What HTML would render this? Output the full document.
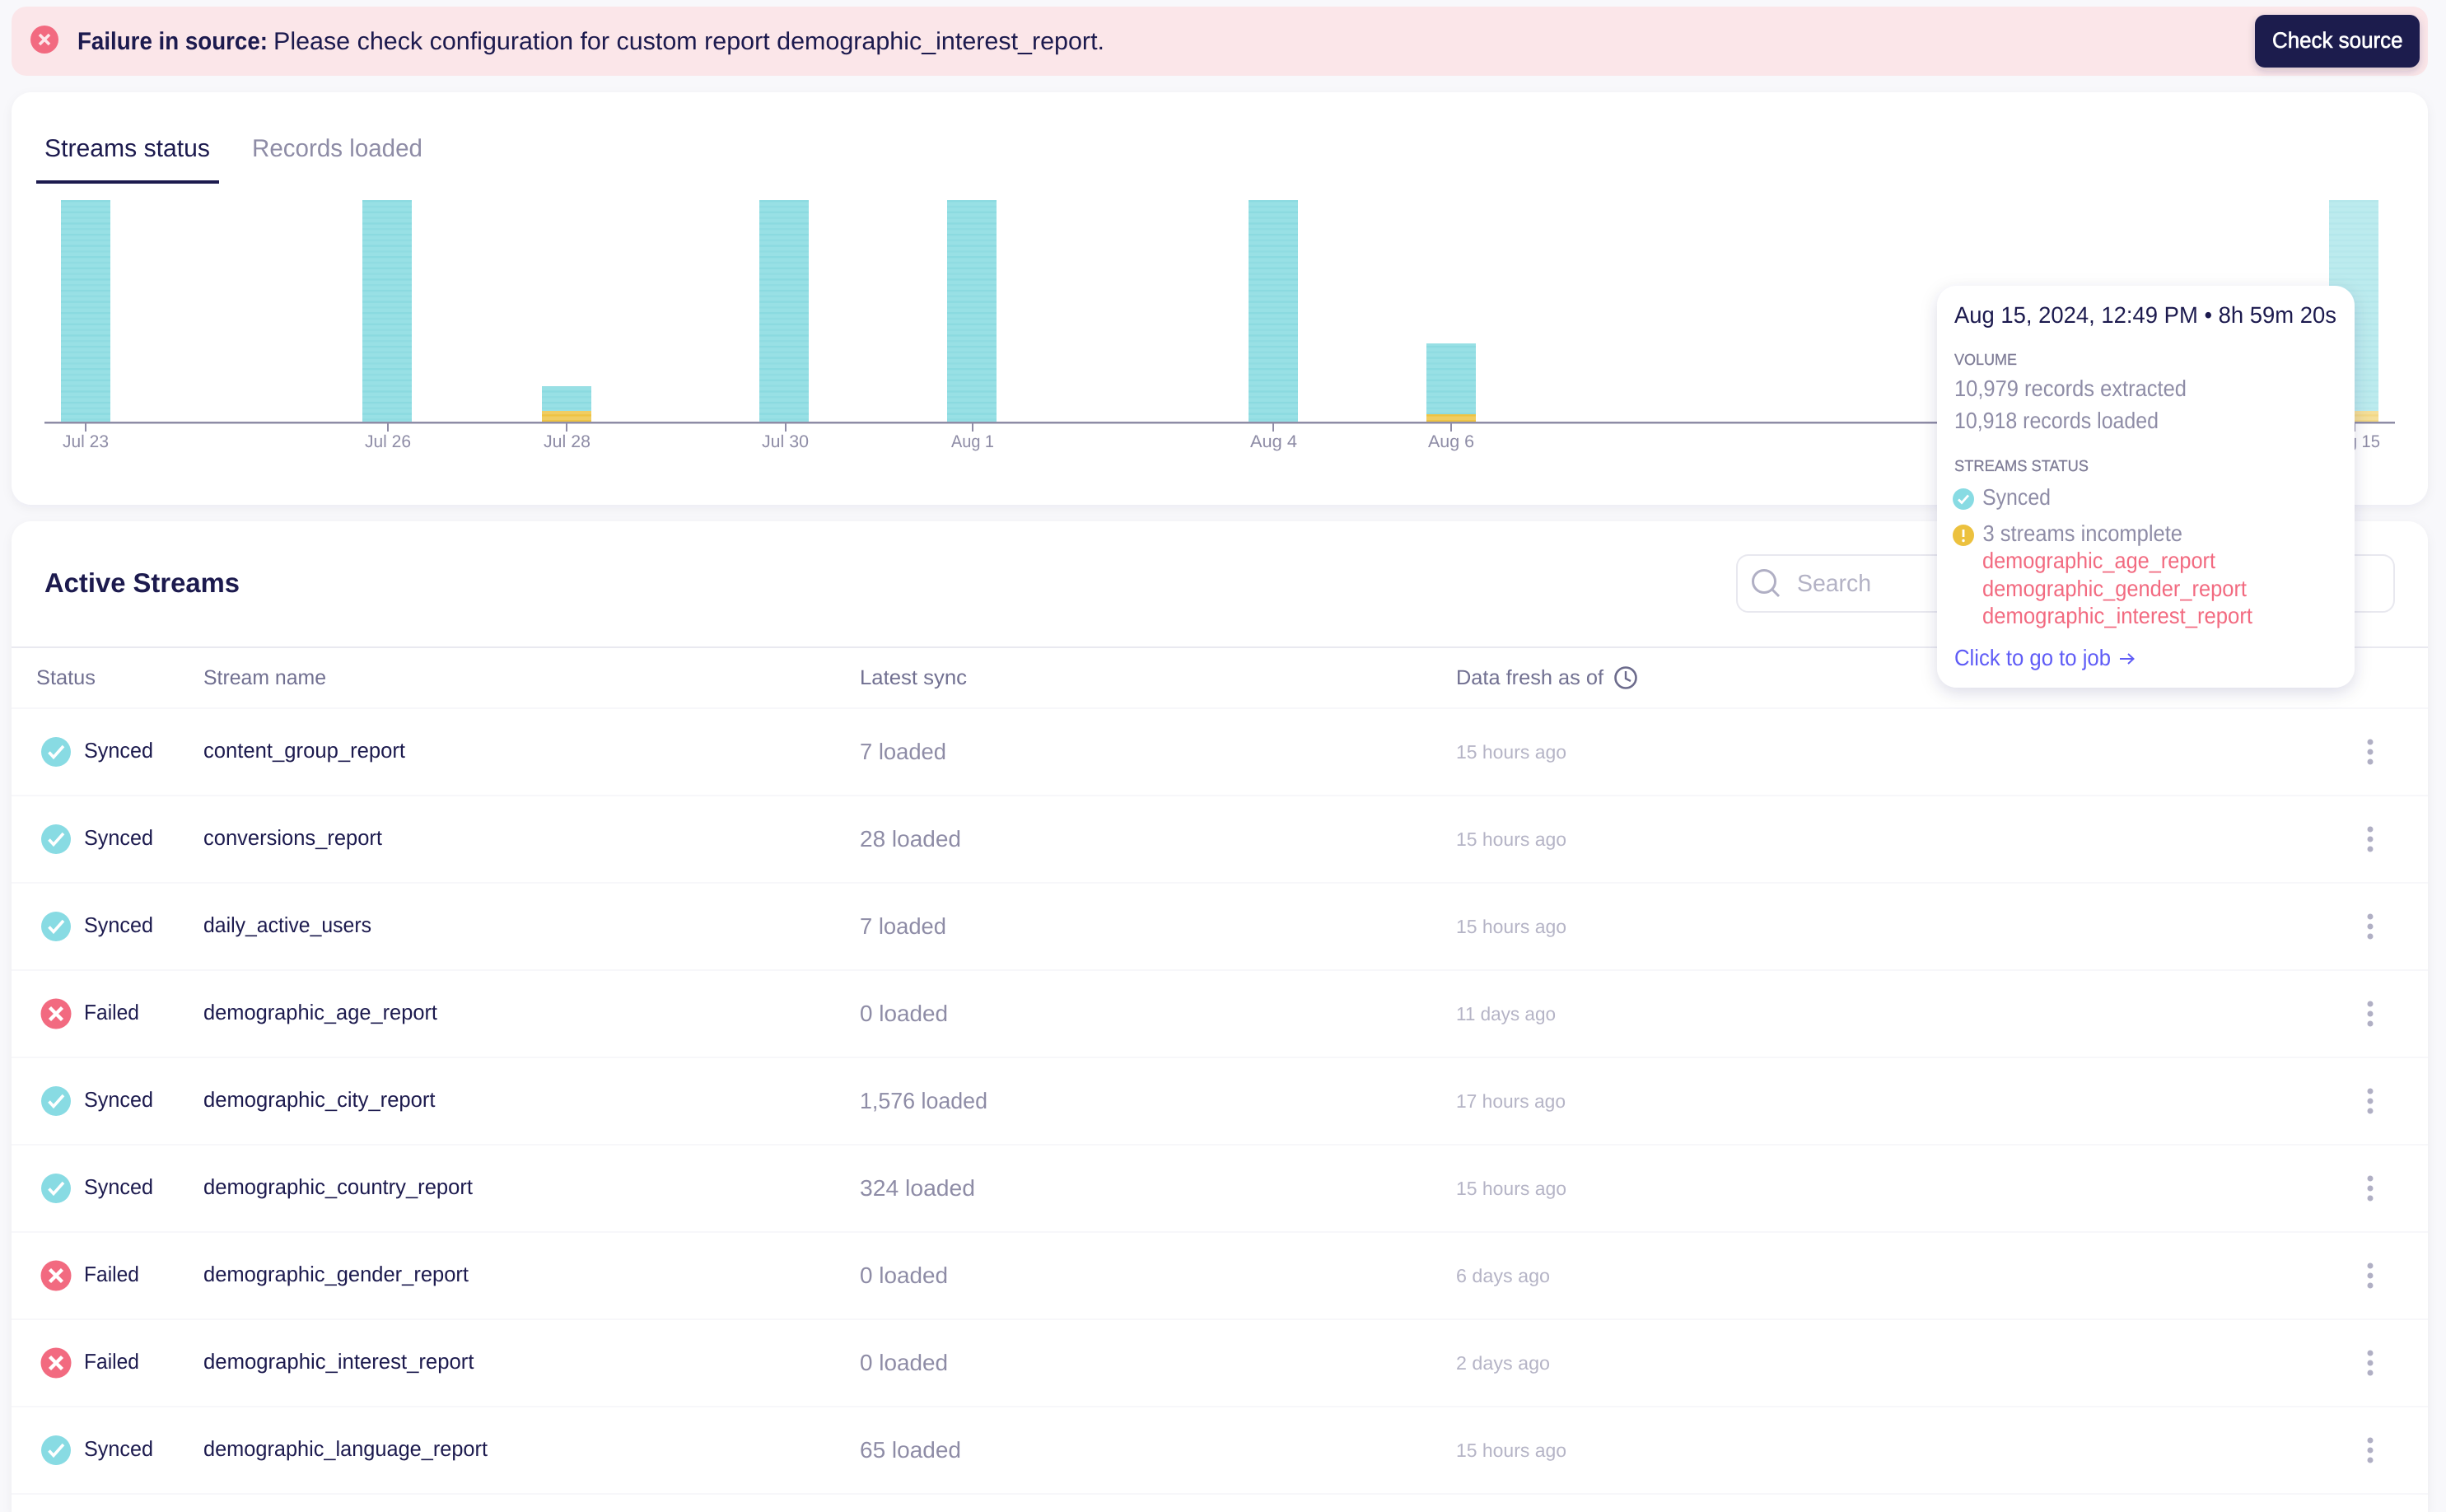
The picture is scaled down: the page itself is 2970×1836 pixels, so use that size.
<!DOCTYPE html>
<html><head><meta charset="utf-8"><title>Streams</title>
<style>
html,body{margin:0;padding:0;background:#f8f8fb;width:2970px;height:1836px;overflow:hidden}
svg{display:block}
text{font-family:"Liberation Sans",sans-serif;text-rendering:geometricPrecision}
.n{fill:#1c1a4e;font-size:26px}
.g{fill:#8e8ca6;font-size:27.5px}
.a{fill:#b5b4c6;font-size:23px}
.h{fill:#717091;font-size:25px}
.l{fill:#8e8ca6;font-size:21px;text-anchor:start}
.c{fill:#7f7d97;font-size:19px;stroke:#7f7d97;stroke-width:.3px}
.r{fill:#f26a80;font-size:27.5px}
</style></head><body>
<svg width="2970" height="1836" viewBox="0 0 2970 1836" xmlns="http://www.w3.org/2000/svg">
<defs>
<pattern id="st" width="60" height="13.6" patternUnits="userSpaceOnUse" y="243">
<rect width="60" height="13.6" fill="#98e0e5"/><rect y="0" width="60" height="2.4" fill="#8bdae0"/><rect y="6.8" width="60" height="2.4" fill="#90dce2"/>
</pattern>
<pattern id="sy" width="60" height="6.8" patternUnits="userSpaceOnUse">
<rect width="60" height="6.8" fill="#f0cd62"/><rect y="0" width="60" height="2.4" fill="#edc344"/>
</pattern>
<filter id="sh" x="-5%" y="-10%" width="110%" height="125%"><feDropShadow dx="0" dy="4" stdDeviation="6" flood-color="#1c1a4e" flood-opacity=".05"/></filter>
<filter id="tt" x="-15%" y="-15%" width="130%" height="130%"><feDropShadow dx="0" dy="6" stdDeviation="10" flood-color="#1c1a4e" flood-opacity=".14"/></filter>
<filter id="bs" x="-15%" y="-25%" width="130%" height="160%"><feDropShadow dx="0" dy="4" stdDeviation="5" flood-color="#1c1a4e" flood-opacity=".2"/></filter>
<g id="ok"><circle r="18" fill="#88dbe3"/><path d="M-8.500 .5L-3 6.500L9-7" fill="none" stroke="#fff" stroke-width="3.600"/></g>
<g id="no"><circle r="18.500" fill="#f26a80"/><path d="M-7.500-7.500L7.500 7.500M7.500-7.500L-7.500 7.500" fill="none" stroke="#fff" stroke-width="4.400"/></g>
<g id="kb" fill="#b0afc4"><circle cy="-12" r="3.500"/><circle r="3.500"/><circle cy="12" r="3.500"/></g>
</defs>

<rect width="2970" height="1836" fill="#f8f8fb"/>

<!-- banner -->
<rect x="14" y="8" width="2934" height="84" rx="18" fill="#fbe6e9"/>
<circle cx="54" cy="48" r="17" fill="#f26a80"/>
<path d="M48 42L60 54M60 42L48 54" stroke="#fde6ea" stroke-width="3.600" fill="none"/>
<text x="94" y="60" font-size="30" font-weight="700" fill="#1c1a4e" textLength="231" lengthAdjust="spacingAndGlyphs">Failure in source:</text>
<text x="332" y="60" font-size="30" fill="#1c1a4e" textLength="1009" lengthAdjust="spacingAndGlyphs">Please check configuration for custom report demographic_interest_report.</text>
<rect x="2738" y="18" width="200" height="64" rx="12" fill="#1c1a4e" filter="url(#bs)"/>
<text x="2759" y="58" font-size="27" fill="#fff" stroke="#fff" stroke-width=".6" textLength="158.500" lengthAdjust="spacingAndGlyphs">Check source</text>

<!-- chart card -->
<rect x="14" y="112" width="2934" height="501" rx="24" fill="#fff" filter="url(#sh)"/>
<text x="54" y="190" font-size="30" fill="#1c1a4e" textLength="201" lengthAdjust="spacingAndGlyphs">Streams status</text>
<text x="306" y="190" font-size="30" fill="#8e8ca6" textLength="207" lengthAdjust="spacingAndGlyphs">Records loaded</text>
<rect x="44" y="219" width="222" height="4" fill="#1c1a4e"/>

<g fill="url(#st)">
<rect x="74" y="243" width="60" height="269"/>
<rect x="440" y="243" width="60" height="269"/>
<rect x="658" y="469" width="60" height="30"/>
<rect x="922" y="243" width="60" height="269"/>
<rect x="1150" y="243" width="60" height="269"/>
<rect x="1516" y="243" width="60" height="269"/>
<rect x="1732" y="417" width="60" height="86"/>
<rect x="2828" y="243" width="60" height="256" opacity=".65"/>
</g>
<g fill="url(#sy)">
<rect x="658" y="499" width="60" height="13"/>
<rect x="1732" y="503" width="60" height="9"/>
<rect x="2828" y="499" width="60" height="13" opacity=".65"/>
</g>
<rect x="54" y="512" width="2854" height="2.500" fill="#8e8ca6"/>
<g fill="#8e8ca6">
<rect x="103" y="514" width="2" height="10"/><rect x="470" y="514" width="2" height="10"/><rect x="687" y="514" width="2" height="10"/><rect x="953" y="514" width="2" height="10"/><rect x="1180" y="514" width="2" height="10"/><rect x="1545" y="514" width="2" height="10"/><rect x="1761" y="514" width="2" height="10"/><rect x="2858" y="514" width="2" height="10"/>
</g>
<text class="l" x="76" y="543" textLength="56" lengthAdjust="spacingAndGlyphs">Jul 23</text>
<text class="l" x="443" y="543" textLength="56" lengthAdjust="spacingAndGlyphs">Jul 26</text>
<text class="l" x="660" y="543" textLength="57" lengthAdjust="spacingAndGlyphs">Jul 28</text>
<text class="l" x="925" y="543" textLength="57" lengthAdjust="spacingAndGlyphs">Jul 30</text>
<text class="l" x="1155" y="543" textLength="52" lengthAdjust="spacingAndGlyphs">Aug 1</text>
<text class="l" x="1518" y="543" textLength="57" lengthAdjust="spacingAndGlyphs">Aug 4</text>
<text class="l" x="1734" y="543" textLength="56" lengthAdjust="spacingAndGlyphs">Aug 6</text>
<text class="l" x="2826" y="543" textLength="64" lengthAdjust="spacingAndGlyphs">Aug 15</text>

<!-- table card -->
<path d="M14 1836V657a24 24 0 0 1 24-24H2924a24 24 0 0 1 24 24V1836Z" fill="#fff" filter="url(#sh)"/>
<text x="54" y="719" font-size="33" font-weight="700" fill="#1c1a4e" textLength="237" lengthAdjust="spacingAndGlyphs">Active Streams</text>
<rect x="2109" y="674" width="798" height="69" rx="14" fill="#fff" stroke="#e8e8ef" stroke-width="2"/>
<circle cx="2142" cy="706" r="13.500" fill="none" stroke="#b0afc4" stroke-width="3"/>
<path d="M2152 716L2160 724" stroke="#b0afc4" stroke-width="3" fill="none"/>
<text x="2182" y="718" font-size="29" fill="#b3b2c5" textLength="90" lengthAdjust="spacingAndGlyphs">Search</text>
<rect x="14" y="785" width="2934" height="2" fill="#e9e9f0"/>

<text class="h" x="44" y="831" textLength="72" lengthAdjust="spacingAndGlyphs">Status</text>
<text class="h" x="247" y="831" textLength="149" lengthAdjust="spacingAndGlyphs">Stream name</text>
<text class="h" x="1044" y="831" textLength="130" lengthAdjust="spacingAndGlyphs">Latest sync</text>
<text class="h" x="1768" y="831" textLength="179" lengthAdjust="spacingAndGlyphs">Data fresh as of</text>
<circle cx="1974" cy="823" r="12.500" fill="none" stroke="#6c6b8c" stroke-width="2.600"/>
<path d="M1974 815V824L1980 827" fill="none" stroke="#6c6b8c" stroke-width="2.400"/>

<g fill="#f7f7fa">
<rect x="14" y="859" width="2934" height="2"/><rect x="14" y="965" width="2934" height="2"/><rect x="14" y="1071" width="2934" height="2"/><rect x="14" y="1177" width="2934" height="2"/><rect x="14" y="1283" width="2934" height="2"/><rect x="14" y="1389" width="2934" height="2"/><rect x="14" y="1495" width="2934" height="2"/><rect x="14" y="1601" width="2934" height="2"/><rect x="14" y="1707" width="2934" height="2"/><rect x="14" y="1813" width="2934" height="2"/>
</g>

<!-- rows -->
<use href="#ok" x="68" y="913"/><text class="n" x="102" y="920" textLength="84" lengthAdjust="spacingAndGlyphs">Synced</text><text class="n" x="247" y="920" textLength="245" lengthAdjust="spacingAndGlyphs">content_group_report</text><text class="g" x="1044" y="922" textLength="105" lengthAdjust="spacingAndGlyphs">7 loaded</text><text class="a" x="1768" y="921" textLength="134" lengthAdjust="spacingAndGlyphs">15 hours ago</text><use href="#kb" x="2878" y="913"/>

<use href="#ok" x="68" y="1019"/><text class="n" x="102" y="1026" textLength="84" lengthAdjust="spacingAndGlyphs">Synced</text><text class="n" x="247" y="1026" textLength="217" lengthAdjust="spacingAndGlyphs">conversions_report</text><text class="g" x="1044" y="1028" textLength="123" lengthAdjust="spacingAndGlyphs">28 loaded</text><text class="a" x="1768" y="1027" textLength="134" lengthAdjust="spacingAndGlyphs">15 hours ago</text><use href="#kb" x="2878" y="1019"/>

<use href="#ok" x="68" y="1125"/><text class="n" x="102" y="1132" textLength="84" lengthAdjust="spacingAndGlyphs">Synced</text><text class="n" x="247" y="1132" textLength="204" lengthAdjust="spacingAndGlyphs">daily_active_users</text><text class="g" x="1044" y="1134" textLength="105" lengthAdjust="spacingAndGlyphs">7 loaded</text><text class="a" x="1768" y="1133" textLength="134" lengthAdjust="spacingAndGlyphs">15 hours ago</text><use href="#kb" x="2878" y="1125"/>

<use href="#no" x="68" y="1231"/><text class="n" x="102" y="1238" textLength="67" lengthAdjust="spacingAndGlyphs">Failed</text><text class="n" x="247" y="1238" textLength="284" lengthAdjust="spacingAndGlyphs">demographic_age_report</text><text class="g" x="1044" y="1240" textLength="107" lengthAdjust="spacingAndGlyphs">0 loaded</text><text class="a" x="1768" y="1239" textLength="121" lengthAdjust="spacingAndGlyphs">11 days ago</text><use href="#kb" x="2878" y="1231"/>

<use href="#ok" x="68" y="1337"/><text class="n" x="102" y="1344" textLength="84" lengthAdjust="spacingAndGlyphs">Synced</text><text class="n" x="247" y="1344" textLength="281.500" lengthAdjust="spacingAndGlyphs">demographic_city_report</text><text class="g" x="1044" y="1346" textLength="155" lengthAdjust="spacingAndGlyphs">1,576 loaded</text><text class="a" x="1768" y="1345" textLength="133" lengthAdjust="spacingAndGlyphs">17 hours ago</text><use href="#kb" x="2878" y="1337"/>

<use href="#ok" x="68" y="1443"/><text class="n" x="102" y="1450" textLength="84" lengthAdjust="spacingAndGlyphs">Synced</text><text class="n" x="247" y="1450" textLength="327" lengthAdjust="spacingAndGlyphs">demographic_country_report</text><text class="g" x="1044" y="1452" textLength="140" lengthAdjust="spacingAndGlyphs">324 loaded</text><text class="a" x="1768" y="1451" textLength="134" lengthAdjust="spacingAndGlyphs">15 hours ago</text><use href="#kb" x="2878" y="1443"/>

<use href="#no" x="68" y="1549"/><text class="n" x="102" y="1556" textLength="67" lengthAdjust="spacingAndGlyphs">Failed</text><text class="n" x="247" y="1556" textLength="322" lengthAdjust="spacingAndGlyphs">demographic_gender_report</text><text class="g" x="1044" y="1558" textLength="107" lengthAdjust="spacingAndGlyphs">0 loaded</text><text class="a" x="1768" y="1557" textLength="114" lengthAdjust="spacingAndGlyphs">6 days ago</text><use href="#kb" x="2878" y="1549"/>

<use href="#no" x="68" y="1655"/><text class="n" x="102" y="1662" textLength="67" lengthAdjust="spacingAndGlyphs">Failed</text><text class="n" x="247" y="1662" textLength="328.500" lengthAdjust="spacingAndGlyphs">demographic_interest_report</text><text class="g" x="1044" y="1664" textLength="107" lengthAdjust="spacingAndGlyphs">0 loaded</text><text class="a" x="1768" y="1663" textLength="114" lengthAdjust="spacingAndGlyphs">2 days ago</text><use href="#kb" x="2878" y="1655"/>

<use href="#ok" x="68" y="1761"/><text class="n" x="102" y="1768" textLength="84" lengthAdjust="spacingAndGlyphs">Synced</text><text class="n" x="247" y="1768" textLength="345" lengthAdjust="spacingAndGlyphs">demographic_language_report</text><text class="g" x="1044" y="1770" textLength="123" lengthAdjust="spacingAndGlyphs">65 loaded</text><text class="a" x="1768" y="1769" textLength="134" lengthAdjust="spacingAndGlyphs">15 hours ago</text><use href="#kb" x="2878" y="1761"/>

<!-- tooltip -->
<rect x="2352" y="347" width="507" height="488" rx="24" fill="#fff" filter="url(#tt)"/>
<text x="2373" y="392" font-size="28" fill="#1c1a4e" textLength="464" lengthAdjust="spacingAndGlyphs">Aug 15, 2024, 12:49 PM • 8h 59m 20s</text>
<text class="c" x="2373" y="443" textLength="76" lengthAdjust="spacingAndGlyphs">VOLUME</text>
<text class="g" x="2373" y="481" textLength="282" lengthAdjust="spacingAndGlyphs">10,979 records extracted</text>
<text class="g" x="2373" y="520" textLength="248" lengthAdjust="spacingAndGlyphs">10,918 records loaded</text>
<text class="c" x="2373" y="572" textLength="163" lengthAdjust="spacingAndGlyphs">STREAMS STATUS</text>
<circle cx="2384" cy="606" r="13" fill="#88dbe3"/>
<path d="M2378 606.500L2382 610.500L2390 601.500" fill="none" stroke="#fff" stroke-width="2.800"/>
<text class="g" x="2407" y="613" textLength="83" lengthAdjust="spacingAndGlyphs">Synced</text>
<circle cx="2384" cy="650" r="13" fill="#ecc13e"/>
<path d="M2384 643V652" stroke="#fff" stroke-width="2.800" fill="none"/><circle cx="2384" cy="656.500" r="1.700" fill="#fff"/>
<text class="g" x="2407.500" y="657" textLength="242.500" lengthAdjust="spacingAndGlyphs">3 streams incomplete</text>
<text class="r" x="2407" y="690" textLength="283" lengthAdjust="spacingAndGlyphs">demographic_age_report</text>
<text class="r" x="2407" y="724" textLength="321" lengthAdjust="spacingAndGlyphs">demographic_gender_report</text>
<text class="r" x="2407" y="757" textLength="328" lengthAdjust="spacingAndGlyphs">demographic_interest_report</text>
<text x="2373" y="808" font-size="27.500" fill="#5f5cf6" textLength="190" lengthAdjust="spacingAndGlyphs">Click to go to job</text>
<path d="M2574 800H2590M2584 794L2590.500 800L2584 806" fill="none" stroke="#5f5cf6" stroke-width="2"/>
</svg>
</body></html>
